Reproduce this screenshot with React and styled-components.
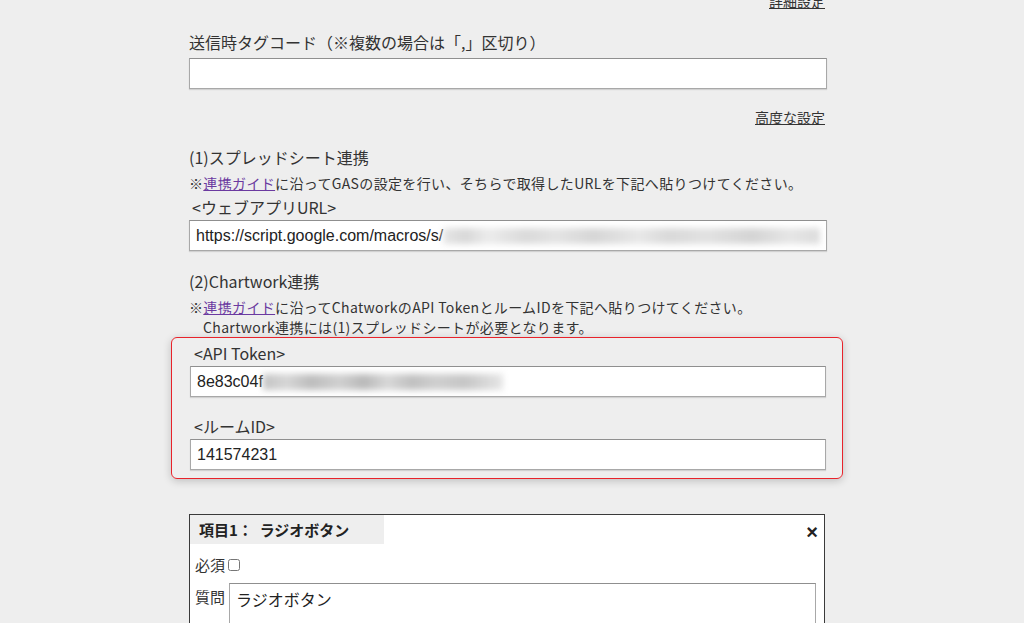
import React from 'react';
import styled, { createGlobalStyle } from 'styled-components';

const GlobalStyle = createGlobalStyle`
  html, body {
    margin: 0;
    padding: 0;
    background: #eeeeee;
    overflow: hidden;
  }
  body {
    font-family: "Noto Sans CJK JP", "Noto Sans", sans-serif;
    color: #333333;
  }
`;

const Page = styled.div`
  width: 638px;
  margin-left: 189px;
`;

const LinkRow = styled.div`
  display: flex;
  justify-content: flex-end;
  padding-right: 2px;
  font-size: 14px;
  line-height: 20px;
  margin-top: ${props => props.top || '0px'};
`;

const PlainLink = styled.a`
  color: #333333;
  text-decoration: underline;
  cursor: pointer;
`;

const Label = styled.div`
  font-size: 16px;
  line-height: 24px;
  margin-top: ${props => props.top || '0px'};
  padding-left: ${props => props.indent || '0px'};
  white-space: nowrap;
`;

const Note = styled.div`
  font-size: 14px;
  line-height: 20px;
  margin-top: ${props => props.top || '0px'};
  white-space: nowrap;
  letter-spacing: 0.35px;
`;

const NoteIndent = styled.div`
  padding-left: 14px;
`;

const GuideLink = styled.a`
  color: #6b3aa0;
  text-decoration: underline;
  cursor: pointer;
`;

const Field = styled.div`
  box-sizing: border-box;
  height: 31px;
  margin-top: ${props => props.top || '0px'};
  background: #ffffff;
  border: 1px solid #a8a8a8;
  border-top-color: #8f8f8f;
  box-shadow: 0 1px 1px rgba(0, 0, 0, 0.12);
  display: flex;
  align-items: center;
  padding: 0 6px;
  font-family: "Liberation Sans", Arial, sans-serif;
  font-size: 16px;
  color: #222222;
  white-space: nowrap;
  overflow: hidden;
`;

const Blur = styled.span`
  display: inline-block;
  flex: ${props => (props.grow ? '1' : 'none')};
  width: ${props => props.w || 'auto'};
  height: 16px;
  background: ${props => props.bg};
  filter: blur(3px);
`;

const Highlight = styled.div`
  margin: 0 -16px 0 -18px;
  padding: 3px 16px 8px 18px;
  border: 1.5px solid #e8232b;
  border-radius: 6px;
  box-shadow: 0 2px 8px rgba(0, 0, 0, 0.2);
`;

const Card = styled.div`
  margin-top: 35px;
  width: 634px;
  background: #ffffff;
  border: 1px solid #3a3a3a;
  padding-bottom: 40px;
`;

const CardHeader = styled.div`
  display: flex;
  justify-content: space-between;
  align-items: center;
  height: 29px;
`;

const Tab = styled.div`
  width: 194px;
  height: 100%;
  background: #eeeeee;
  box-sizing: border-box;
  padding-left: 9px;
  display: flex;
  align-items: center;
  font-size: 15px;
  font-weight: 700;
  color: #222222;
  white-space: pre;
`;

const Close = styled.button`
  border: none;
  background: none;
  padding: 0;
  margin: 4px 6px 0 0;
  font-family: "Liberation Sans", Arial, sans-serif;
  font-size: 20px;
  font-weight: 700;
  line-height: 1;
  color: #222222;
  cursor: pointer;
`;

const Row = styled.div`
  display: flex;
  align-items: ${props => props.align || 'center'};
  gap: ${props => props.gap || '2px'};
  padding: 0 8px 0 5px;
  margin-top: ${props => props.top || '0px'};
  font-size: 15px;
  line-height: 24px;
`;

const RowLabel = styled.span`
  padding-top: ${props => props.pad || '0px'};
  white-space: nowrap;
`;

const Check = styled.input`
  width: 12px;
  height: 12px;
  margin: 0 0 0 1px;
`;

const Question = styled.textarea`
  flex: 1;
  height: 70px;
  margin: 0;
  box-sizing: border-box;
  border: 1px solid #a8a8a8;
  border-top-color: #8f8f8f;
  padding: 4px 6px;
  font-family: "Noto Sans CJK JP", sans-serif;
  font-size: 16px;
  line-height: 22px;
  color: #222222;
  resize: none;
`;

const urlBlur =
  'linear-gradient(90deg, #e6e6e6 0%, #d8d8d8 6%, #ececec 12%, #dadada 22%, #e4e4e4 30%, #d6d6d6 40%, #e8e8e8 52%, #d9d9d9 60%, #e2e2e2 70%, #d4d4d4 82%, #e6e6e6 92%, #dcdcdc 100%)';
const tokenBlur =
  'linear-gradient(90deg, #c4c4c4 0%, #d6d6d6 10%, #bdbdbd 20%, #d0d0d0 32%, #b9b9b9 42%, #d8d8d8 52%, #c0c0c0 62%, #cfcfcf 72%, #c6c6c6 84%, #e6e6e6 100%)';

export default function App() {
  return (
    <>
      <GlobalStyle />
      <Page>
        <LinkRow top="-9px">
          <PlainLink>詳細設定</PlainLink>
        </LinkRow>

        <Label top="19px">送信時タグコード（※複数の場合は「,」区切り）</Label>
        <Field top="4px" />

        <LinkRow top="18px">
          <PlainLink>高度な設定</PlainLink>
        </LinkRow>

        <Label top="18px">(1)スプレッドシート連携</Label>
        <Note top="4px">
          ※<GuideLink>連携ガイド</GuideLink>に沿ってGASの設定を行い、そちらで取得したURLを下記へ貼りつけてください。
        </Note>
        <Label top="2px" indent="3px">&lt;ウェブアプリURL&gt;</Label>
        <Field top="1px">
          https://script.google.com/macros/s/
          <Blur grow bg={urlBlur} />
        </Field>

        <Label top="18px">(2)Chartwork連携</Label>
        <Note top="4px">
          ※<GuideLink>連携ガイド</GuideLink>に沿ってChatworkのAPI TokenとルームIDを下記へ貼りつけてください。
          <NoteIndent>Chartwork連携には(1)スプレッドシートが必要となります。</NoteIndent>
        </Note>

        <Highlight>
          <Label indent="4px">&lt;API Token&gt;</Label>
          <Field top="1px">
            8e83c04f
            <Blur w="240px" bg={tokenBlur} />
          </Field>
          <Label top="17px" indent="4px">&lt;ルームID&gt;</Label>
          <Field top="1px">141574231</Field>
        </Highlight>

        <Card>
          <CardHeader>
            <Tab>項目1：  ラジオボタン</Tab>
            <Close aria-label="close">×</Close>
          </CardHeader>
          <Row top="9px">
            <RowLabel>必須</RowLabel>
            <Check type="checkbox" />
          </Row>
          <Row top="6px" align="flex-start" gap="4px">
            <RowLabel pad="2px">質問</RowLabel>
            <Question defaultValue="ラジオボタン" />
          </Row>
        </Card>
      </Page>
    </>
  );
}
